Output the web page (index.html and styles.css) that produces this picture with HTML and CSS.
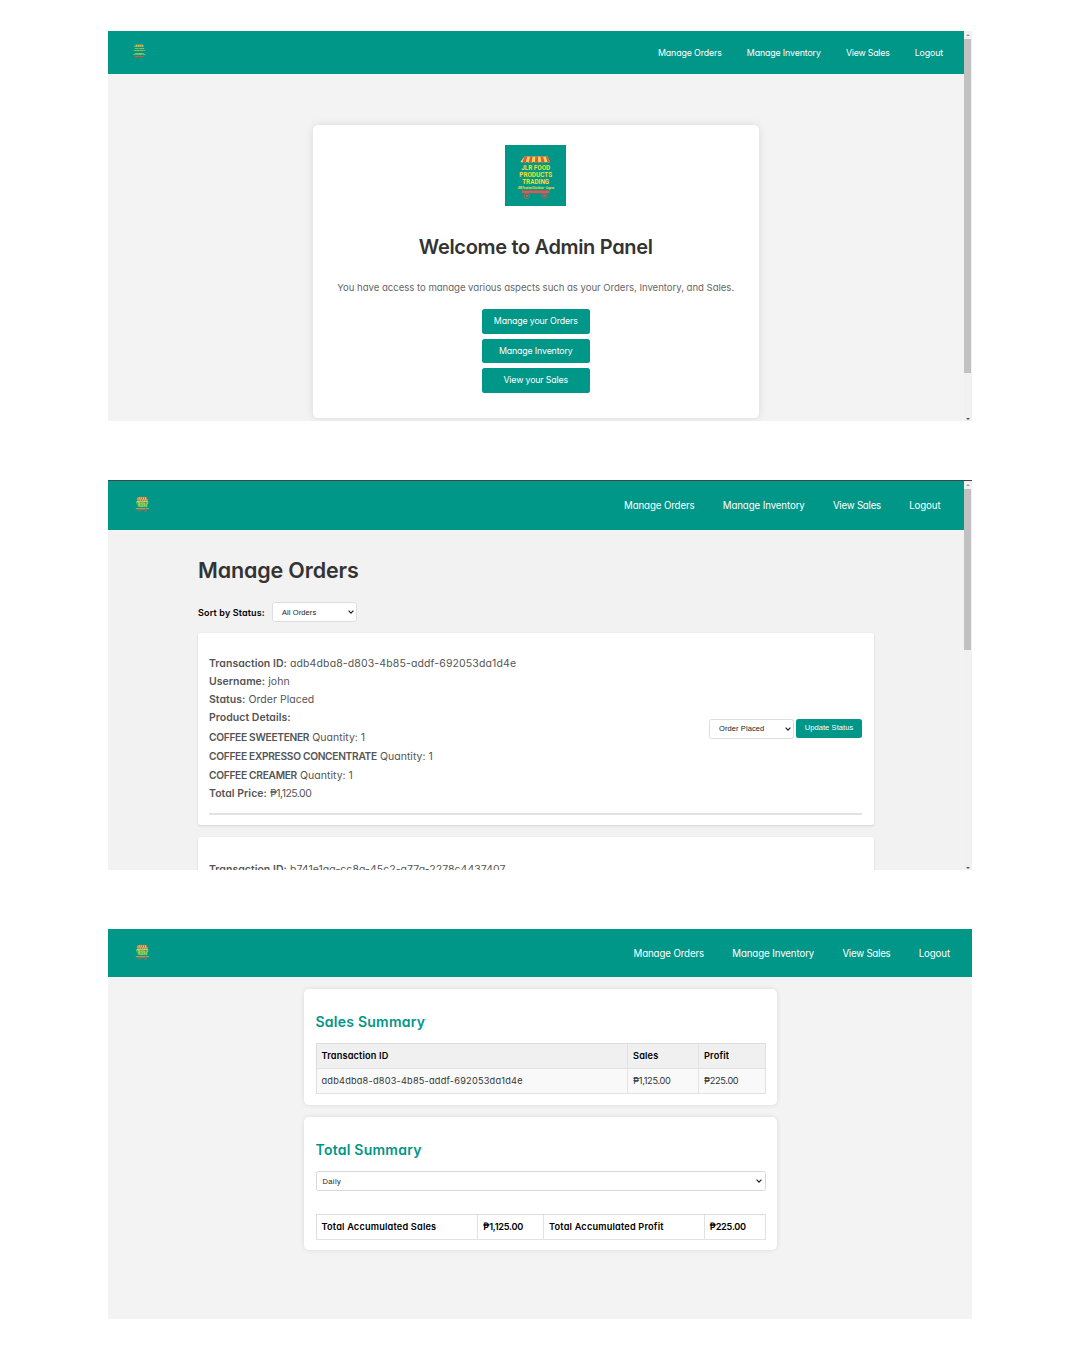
FILE: index.html
```html
<!DOCTYPE html>
<html lang="en">
<head>
<meta charset="utf-8">
<title>JLR Food Products Trading</title>
<link rel="stylesheet" href="styles.css">
</head>
<body>
<svg class="defs" width="0" height="0">
  <symbol id="chevron" viewBox="0 0 6 4"><path d="M.6 .7 3 3.1 5.4 .7" fill="none" stroke="#222" stroke-width="1.2"/></symbol>
  <symbol id="logo" viewBox="0 0 61 61">
    <path fill="#f9d648" d="M19.5 11.5h23l2.5 5.3q-1.500 1.600-3 0-1.500 1.600-3.300 0-1.600 1.600-3.300 0-1.700 1.600-3.400 0-1.600 1.600-3.300 0-1.700 1.600-3.400 0-1.600 1.600-3.300 0-1.700 1.600-3.300 0-1.500 1.600-3.200 0z"/>
    <path fill="#e5554f" d="M19.500 11.500h2.700l-1.300 5.500q-1.700 1.300-3.400 0zM25 11.500h2.600l-.8 5.500q-1.500 1.300-3 0zM30.300 11.500h2.600l.3 5.500q-1.700 1.300-3.300 0zM35.500 11.500h2.600l1.400 5.500q-1.700 1.300-3.300 0zM40.700 11.500h1.800l2.500 5.300q-1 1.300-2.500.2z"/>
    <g class="logo-text" fill="#f5e02c">
      <text x="16.200" y="24.600" textLength="29" lengthAdjust="spacingAndGlyphs">JLR FOOD</text>
      <text x="14.300" y="31.500" textLength="32.800" lengthAdjust="spacingAndGlyphs">PRODUCTS</text>
      <text x="17.200" y="38.500" textLength="27" lengthAdjust="spacingAndGlyphs">TRADING</text>
      <text class="logo-tag" x="12.500" y="44" textLength="36.500" lengthAdjust="spacingAndGlyphs">JMB Food and Distributor - Angono</text>
    </g>
    <path fill="#e5554f" d="M17 45.500h27.500v2.700H17z"/>
    <g fill="none" stroke="#a8655a" stroke-width="1"><circle cx="22" cy="51" r="2.700"/><circle cx="39.500" cy="51" r="2.700"/></g>
    <path fill="#e5554f" d="M21 50h2v2h-2zM38.500 50h2v2h-2z"/>
  </symbol>
</svg>

<section class="screen screen-home">
  <div class="view">
    <header class="bar bar-home">
      <svg class="brand"><use href="#logo"/></svg>
      <nav class="links"><a>Manage Orders</a><a>Manage Inventory</a><a class="tight">View Sales</a><a>Logout</a></nav>
    </header>
    <main class="welcome">
      <svg class="hero-logo"><use href="#logo"/></svg>
      <h1 class="welcome-title">Welcome to Admin Panel</h1>
      <p class="welcome-text">You have access to manage various aspects such as your Orders, Inventory, and Sales.</p>
      <div class="actions"><a class="action">Manage your Orders</a><a class="action">Manage Inventory</a><a class="action">View your Sales</a></div>
    </main>
  </div>
  <div class="scroll"><i class="up"></i><div class="thumb"></div><i class="down"></i></div>
</section>

<section class="screen screen-orders">
  <div class="view">
    <header class="bar bar-orders">
      <svg class="brand"><use href="#logo"/></svg>
      <nav class="links"><a>Manage Orders</a><a>Manage Inventory</a><a class="tight">View Sales</a><a>Logout</a></nav>
    </header>
    <main class="orders">
      <h1 class="orders-title">Manage Orders</h1>
      <div class="sort"><span class="sort-label">Sort by Status:</span><div class="select">All Orders<svg class="chev"><use href="#chevron"/></svg></div></div>
      <article class="order">
        <div class="order-row">
          <div class="order-info">
            <p><b>Transaction ID:</b> <span class="uuid">adb4dba8-d803-4b85-addf-692053da1d4e</span></p>
            <p><b>Username:</b> john</p>
            <p><b>Status:</b> Order Placed</p>
            <p><b>Product Details:</b></p>
            <p><b class="caps">COFFEE SWEETENER</b> Quantity: 1</p>
            <p><b class="caps">COFFEE EXPRESSO CONCENTRATE</b> Quantity: 1</p>
            <p><b class="caps">COFFEE CREAMER</b> Quantity: 1</p>
            <p><b>Total Price:</b> <span class="price">₱1,125.00</span></p>
          </div>
          <div class="order-form"><div class="select">Order Placed<svg class="chev"><use href="#chevron"/></svg></div><a class="update">Update Status</a></div>
        </div>
        <div class="rule"></div>
      </article>
      <article class="order">
        <div class="order-info"><p><b>Transaction ID:</b> <span class="uuid-next">b741e1aa-cc8a-45c2-a77a-2278c4437407</span></p></div>
      </article>
    </main>
  </div>
  <div class="scroll"><i class="up"></i><div class="thumb"></div><i class="down"></i></div>
</section>

<section class="screen screen-sales">
  <div class="view">
    <header class="bar bar-sales">
      <svg class="brand"><use href="#logo"/></svg>
      <nav class="links"><a>Manage Orders</a><a>Manage Inventory</a><a class="tight">View Sales</a><a>Logout</a></nav>
    </header>
    <main class="sales">
      <section class="card card-sales">
        <h2 class="card-title">Sales Summary</h2>
        <div class="grid grid-sales">
          <div class="cell head">Transaction ID</div><div class="cell head">Sales</div><div class="cell head">Profit</div>
          <div class="cell id">adb4dba8-d803-4b85-addf-692053da1d4e</div><div class="cell money">₱1,125.00</div><div class="cell money">₱225.00</div>
        </div>
      </section>
      <section class="card card-total">
        <h2 class="card-title">Total Summary</h2>
        <div class="select period">Daily<svg class="chev"><use href="#chevron"/></svg></div>
        <div class="grid grid-total">
          <div class="cell strong">Total Accumulated Sales</div><div class="cell strong money">₱1,125.00</div><div class="cell strong">Total Accumulated Profit</div><div class="cell strong money">₱225.00</div>
        </div>
      </section>
    </main>
  </div>
</section>
</body>
</html>
```
FILE: styles.css
```css
* { box-sizing: border-box; }
body {
  margin: 0;
  height: 1350px;
  padding: 31px 108px 0;
  overflow: hidden;
  background: #fff;
  font-family: Inter, "Noto Sans", sans-serif;
  font-feature-settings: "cv11";
  white-space: nowrap;
}
h1, h2, p { margin: 0; font-weight: 600; }
.defs { display: block; height: 0; }
.logo-text { font: 700 7.4px "Roboto", sans-serif; }
.logo-tag { font-size: 2.6px; font-style: italic; }

/* screens */
.screen { display: flex; height: 390px; overflow: hidden; background: #f3f3f3; }
.screen-orders { margin-top: 59px; background: #f2f2f2; border-top: 1px solid #39474a; }
.screen-sales { margin-top: 59px; }
.view { flex: 1; min-width: 0; }

/* header bars */
.bar { display: flex; justify-content: space-between; align-items: center; background: #009688; color: #fff; }
.bar-home { height: 43px; padding: 0 20.500px 0 20.500px; }
.bar-orders { height: 49px; padding: 0 23px 0 23px; }
.bar-sales { height: 48px; padding: 0 22px 0 23px; }
.brand { width: 22px; height: 22px; margin-top: -4px; }
.bar-home .brand { width: 20px; height: 20px; }
.bar-sales .brand { margin-top: -3px; }
.links { display: flex; gap: 28.200px; font-size: 9.700px; letter-spacing: -.0105em; }
.links .tight { letter-spacing: -.024em; }
.bar-home .links { gap: 25.200px; font-size: 8.800px; letter-spacing: -.0145em; }

/* scrollbars */
.scroll { display: flex; flex-direction: column; align-items: center; width: 8.500px; background: #f1f1f1; }
.up, .down { width: 0; height: 0; border: 2.500px solid transparent; }
.up { margin-top: 1px; border-bottom-color: #a0a0a0; }
.down { margin: auto 0 -.5px; border-top-color: #555; }
.thumb { width: 7px; height: 334px; margin-top: 3px; background: #c1c1c1; }
.screen-orders .thumb { height: 160.500px; }

/* home */
.welcome {
  display: flex; flex-direction: column; align-items: center;
  width: 445.500px; height: 292.500px; margin: 51px 0 0 205px; padding-top: 20px;
  background: #fff; border-radius: 5px; box-shadow: 0 0 9px rgba(0, 0, 0, .1);
}
.hero-logo { width: 61px; height: 61px; background: #009688; }
.welcome-title { margin-top: 26px; color: #333; font-size: 20px; line-height: 30px; letter-spacing: -.0165em; }
.welcome-text { margin-top: 18px; color: #666; font-size: 9.600px; font-weight: 400; line-height: 16px; letter-spacing: -.0037em; }
.actions { display: flex; flex-direction: column; gap: 5px; margin-top: 13px; }
.action {
  width: 108px; height: 24.500px; border-radius: 2.500px; background: #009688; color: #fff;
  font-size: 8.800px; line-height: 24.500px; letter-spacing: -.016em; text-align: center;
}

/* orders */
.orders { width: 675.500px; margin: 25px 0 0 90px; }
.orders-title { color: #333; font-size: 21.500px; line-height: 30px; letter-spacing: -.0068em; }
.sort { display: flex; align-items: center; height: 20px; margin-top: 17px; }
.sort-label { width: 74px; font-size: 9px; font-weight: 600; letter-spacing: .017em; }
.select {
  display: flex; justify-content: space-between; align-items: center;
  width: 85px; height: 20px; padding: 0 2.500px 0 9px;
  border: 1px solid #ddd; border-radius: 2.500px; background: #fff; color: #222;
  font: 7.500px "Liberation Sans", Arial, sans-serif; letter-spacing: .012em;
}
.chev { width: 6px; height: 4px; }
.order {
  height: 192.500px; margin-top: 10.500px; padding: 24px 11.500px 0 11px;
  background: #fff; border-radius: 2.500px; box-shadow: 0 1px 2.500px rgba(0, 0, 0, .13);
}
.order + .order { margin-top: 11.500px; }
.order-row { display: flex; justify-content: space-between; align-items: center; height: 145px; }
.order-info { color: #555; font-size: 10.500px; line-height: 18.080px; letter-spacing: .003em; }
.order-info p { font-weight: 400; }
.order-info b { font-weight: 600; }
.order-info .caps { font-size: 10.200px; letter-spacing: -.0295em; }
.uuid { letter-spacing: .0125em; }
.uuid-next { letter-spacing: .0048em; }
.price { letter-spacing: -.051em; }
.order-form { display: flex; align-items: center; gap: 2px; margin-top: -1px; }
.update {
  width: 66px; height: 18.500px; border-radius: 2.500px; background: #009688; color: #fff; text-align: center;
  font: 7.500px/18.500px "Liberation Sans", Arial, sans-serif; letter-spacing: .012em;
}
.rule { height: 1.500px; margin-top: 11.500px; background: #e2e2e2; }

/* sales */
.sales { width: 472.500px; margin: 11.500px 0 0 196px; }
.card { padding: 21px 11px 0 11.500px; background: #fff; border-radius: 5px; box-shadow: 0 0 5px rgba(0, 0, 0, .1); }
.card-sales { height: 116.500px; }
.card-total { height: 133.500px; margin-top: 11.500px; }
.card-title { color: #009688; font-size: 14px; line-height: 24px; letter-spacing: .017em; }
.grid { display: grid; border: solid #ddd; border-width: 1px 0 0 1px; font-size: 9.200px; }
.grid-sales { grid-template-columns: 311.500px 71px 1fr; margin-top: 9px; }
.grid-total { grid-template-columns: 161.500px 66px 160.500px 1fr; margin-top: 22.500px; }
.cell { height: 25px; padding-left: 5px; border: solid #e2e2e2; border-width: 0 1px 1px 0; line-height: 24.500px; }
.head { background: #f0f0f0; font-weight: 600; letter-spacing: .017em; }
.id, .id ~ .cell { background: #f9f9f9; color: #333; }
.id { letter-spacing: .0222em; }
.money { letter-spacing: -.036em; }
.strong { font-weight: 600; letter-spacing: .0197em; }
.strong.money { letter-spacing: -.028em; }
.period { width: 100%; margin-top: 9.500px; padding-left: 6px; border-color: #d8d8d8; letter-spacing: .05em; }
```
